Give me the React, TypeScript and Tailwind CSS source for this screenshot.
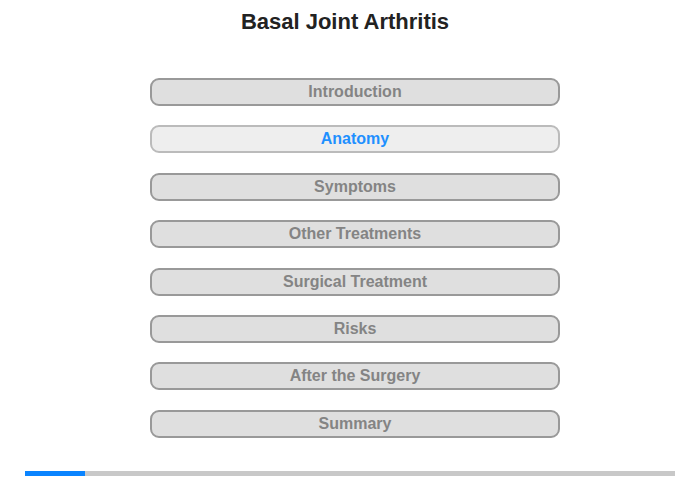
const sections = [
  "Introduction",
  "Anatomy",
  "Symptoms",
  "Other Treatments",
  "Surgical Treatment",
  "Risks",
  "After the Surgery",
  "Summary",
];

export default function App() {
  const active = "Anatomy";

  return (
    <div className="w-[700px] h-[480px] bg-white flex flex-col font-['Liberation_Sans',Arial,sans-serif]">
      {/* TITLE */}
      <h1 className="pt-[11px] pr-[10px] text-center text-[22px] leading-[22px] font-bold text-[#222222]">
        Basal Joint Arthritis
      </h1>

      {/* MENU */}
      <div className="mt-[45px] ml-[150px] w-[410px] flex flex-col gap-[19.4px]">
        {sections.map((s) => (
          <button
            key={s}
            className={`h-[28px] w-full rounded-[9px] border-2 text-[16px] font-bold leading-none ${
              s === active
                ? "bg-[#eeeeee] border-[#bbbbbb] text-[#1e90ff]"
                : "bg-[#dfdfdf] border-[#999999] text-[#848484]"
            }`}
          >
            {s}
          </button>
        ))}
      </div>

      {/* PROGRESS */}
      <div className="mt-auto mb-[4px] mx-[25px] h-[5px] bg-[#c8c8c8] flex">
        <div className="w-[60px] h-full bg-[#0a84ff]" />
      </div>
    </div>
  );
}
